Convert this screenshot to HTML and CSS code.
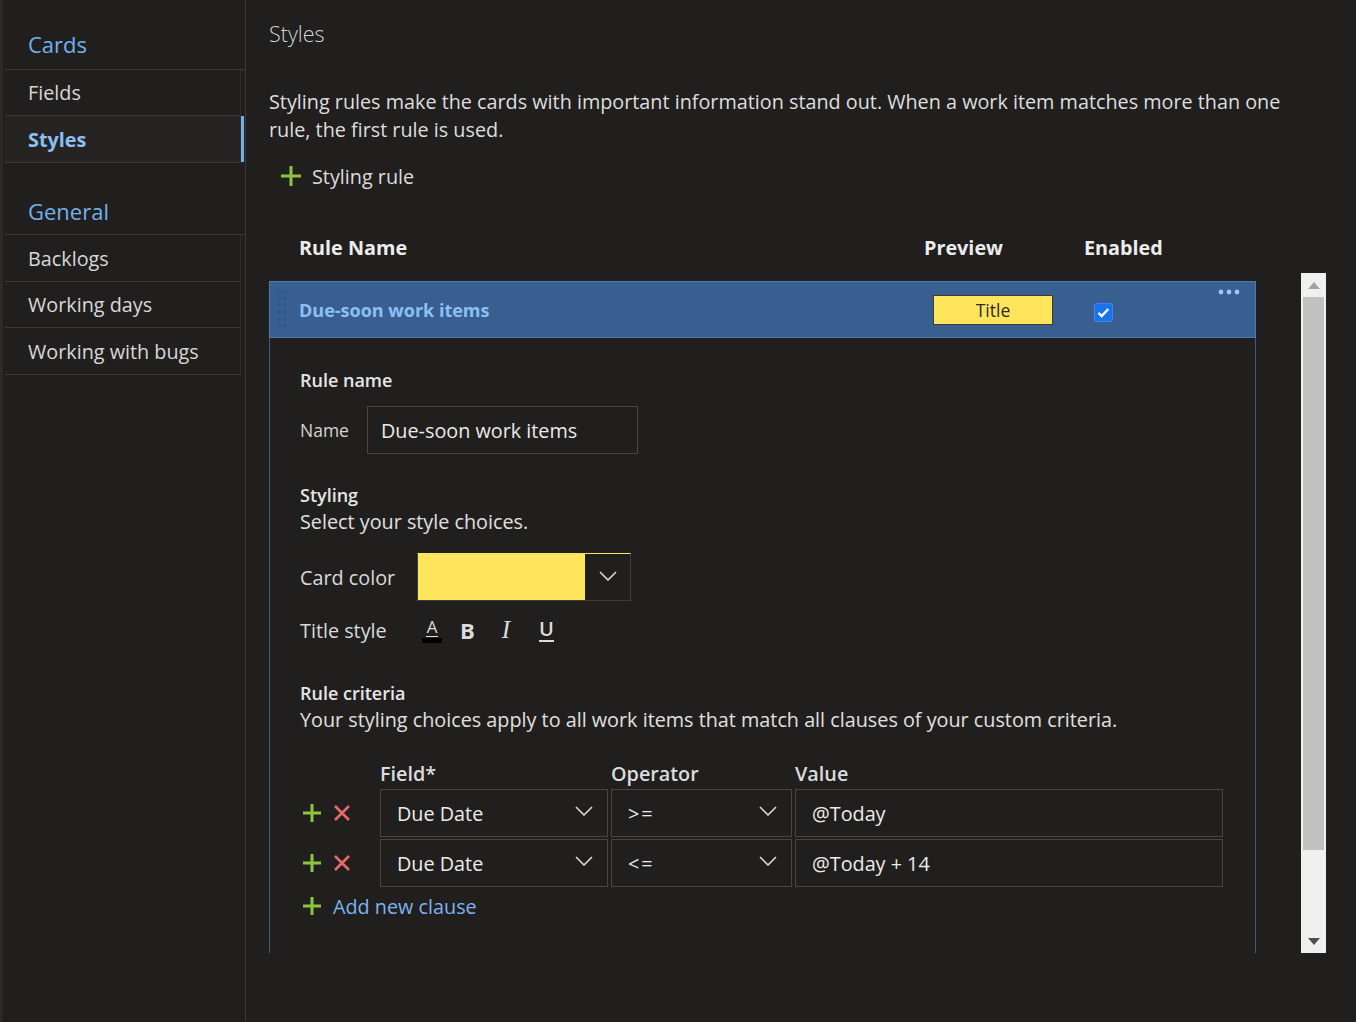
FILE: index.html
```html
<!DOCTYPE html>
<html lang="en">
<head>
<meta charset="utf-8">
<title>Styles</title>
<link rel="stylesheet" href="styles.css">
</head>
<body>
<div class="app">
  <nav class="sidebar">
    <div class="nav-head">Cards</div>
    <div class="nav-item">Fields</div>
    <div class="nav-item tall selected">Styles</div>
    <div class="nav-head group">General</div>
    <div class="nav-item tall">Backlogs</div>
    <div class="nav-item">Working days</div>
    <div class="nav-item tall">Working with bugs</div>
  </nav>

  <main class="main">
    <h1 class="title">Styles</h1>
    <p class="intro">Styling rules make the cards with important information stand out. When a work item matches more than one rule, the first rule is used.</p>
    <div class="add-rule">
      <svg class="plus" width="22" height="22" viewBox="0 0 22 22"><path d="M11 1v20M1 11h20" stroke="#8cc63f" stroke-width="3"/></svg>
      <span>Styling rule</span>
    </div>

    <div class="table-head">
      <span>Rule Name</span>
      <span>Preview</span>
      <span>Enabled</span>
    </div>

    <div class="scroll-area">
      <div class="list">
        <div class="rule-row">
          <svg class="grip" width="16" height="46" viewBox="0 0 16 46">
            <g fill="#2d5a8c">
              <circle cx="3" cy="4" r="2"/><circle cx="9" cy="4" r="2"/>
              <circle cx="3" cy="11" r="2"/><circle cx="9" cy="11" r="2"/>
              <circle cx="3" cy="18" r="2"/><circle cx="9" cy="18" r="2"/>
              <circle cx="3" cy="25" r="2"/><circle cx="9" cy="25" r="2"/>
              <circle cx="3" cy="32" r="2"/><circle cx="9" cy="32" r="2"/>
              <circle cx="3" cy="39" r="2"/><circle cx="9" cy="39" r="2"/>
            </g>
          </svg>
          <span class="rule-name">Due-soon work items</span>
          <span class="preview-cell"><span class="preview">Title</span></span>
          <span class="enabled-cell">
            <svg width="19" height="19" viewBox="0 0 19 19"><rect x="0.5" y="0.5" width="18" height="18" rx="2" fill="#1a73e8" stroke="#3b86f0"/><path d="M4.5 9.8l3.2 3.2 6.6-7" fill="none" stroke="#fff" stroke-width="2.4"/></svg>
          </span>
          <span class="more">
            <svg width="22" height="6" viewBox="0 0 22 6"><g fill="#9cc9f5"><circle cx="3" cy="3" r="2.4"/><circle cx="11" cy="3" r="2.4"/><circle cx="19" cy="3" r="2.4"/></g></svg>
          </span>
        </div>

        <div class="panel">
          <div class="section-label">Rule name</div>
          <div class="name-row">
            <span class="small-label">Name</span>
            <div class="textbox">Due-soon work items</div>
          </div>

          <div class="section-label styling">Styling</div>
          <div class="section-desc">Select your style choices.</div>

          <div class="field-row color-row">
            <span class="field-label">Card color</span>
            <div class="color-drop">
              <span class="swatch"></span>
              <span class="drop-btn">
                <svg width="18" height="10" viewBox="0 0 18 10"><path d="M1 1l8 8 8-8" fill="none" stroke="#e0e0e0" stroke-width="1.5"/></svg>
              </span>
            </div>
          </div>

          <div class="field-row style-row">
            <span class="field-label">Title style</span>
            <div class="style-tools">
              <span class="tool tool-a"><span class="a-letter">A</span><span class="a-bar"></span></span>
              <span class="tool tool-b">B</span>
              <span class="tool tool-i">I</span>
              <span class="tool tool-u">U</span>
            </div>
          </div>

          <div class="section-label criteria">Rule criteria</div>
          <div class="section-desc">Your styling choices apply to all work items that match all clauses of your custom criteria.</div>

          <div class="clause-grid">
            <span></span>
            <span class="col-head">Field*</span>
            <span class="col-head">Operator</span>
            <span class="col-head">Value</span>

            <span class="clause-actions">
              <svg width="20" height="20" viewBox="0 0 20 20"><path d="M10 1v18M1 10h18" stroke="#8cc63f" stroke-width="3"/></svg>
              <svg width="18" height="18" viewBox="0 0 18 18"><path d="M2 2l14 14M16 2L2 16" stroke="#e8686c" stroke-width="2.6"/></svg>
            </span>
            <div class="select"><span>Due Date</span><svg width="18" height="10" viewBox="0 0 18 10"><path d="M1 1l8 8 8-8" fill="none" stroke="#e0e0e0" stroke-width="1.5"/></svg></div>
            <div class="select"><span class="op">&gt;=</span><svg width="18" height="10" viewBox="0 0 18 10"><path d="M1 1l8 8 8-8" fill="none" stroke="#e0e0e0" stroke-width="1.5"/></svg></div>
            <div class="select value">@Today</div>

            <span class="clause-actions">
              <svg width="20" height="20" viewBox="0 0 20 20"><path d="M10 1v18M1 10h18" stroke="#8cc63f" stroke-width="3"/></svg>
              <svg width="18" height="18" viewBox="0 0 18 18"><path d="M2 2l14 14M16 2L2 16" stroke="#e8686c" stroke-width="2.6"/></svg>
            </span>
            <div class="select"><span>Due Date</span><svg width="18" height="10" viewBox="0 0 18 10"><path d="M1 1l8 8 8-8" fill="none" stroke="#e0e0e0" stroke-width="1.5"/></svg></div>
            <div class="select"><span class="op">&lt;=</span><svg width="18" height="10" viewBox="0 0 18 10"><path d="M1 1l8 8 8-8" fill="none" stroke="#e0e0e0" stroke-width="1.5"/></svg></div>
            <div class="select value">@Today + 14</div>
          </div>

          <div class="add-clause">
            <svg width="20" height="20" viewBox="0 0 20 20"><path d="M10 1v18M1 10h18" stroke="#8cc63f" stroke-width="3"/></svg>
            <span>Add new clause</span>
          </div>
          <div class="panel-tail"></div>
        </div>
      </div>

      <div class="scrollbar">
        <div class="sb-arrow">
          <svg width="12" height="7" viewBox="0 0 12 7"><path d="M6 0L12 7H0z" fill="#a3a3a3"/></svg>
        </div>
        <div class="sb-thumb"></div>
        <div class="sb-rest"></div>
        <div class="sb-arrow">
          <svg width="12" height="7" viewBox="0 0 12 7"><path d="M0 0h12L6 7z" fill="#505050"/></svg>
        </div>
      </div>
    </div>
  </main>
</div>
</body>
</html>
```

FILE: styles.css
```css
* { box-sizing: border-box; }

html, body {
  margin: 0;
  padding: 0;
  background: #201f1e;
}

body {
  font-family: "Open Sans", "Noto Sans", sans-serif;
  color: #dcdcdc;
  font-size: 19.8px;
}

.app {
  display: flex;
  height: 1022px;
  overflow: hidden;
}

/* Sidebar */
.sidebar {
  width: 246px;
  flex: none;
  border-left: 3px solid #2b2a29;
  border-right: 1px solid #3a3938;
  padding-top: 19px;
}

.nav-head {
  height: 51px;
  margin-left: 2px;
  padding-left: 23px;
  display: flex;
  align-items: center;
  font-size: 22px;
  color: #72b1ee;
  border-bottom: 1px solid #3a3938;
}

.nav-head.group {
  margin-top: 23px;
  height: 49px;
  padding-top: 1px;
}

.nav-item {
  position: relative;
  height: 46px;
  margin-left: 2px;
  margin-right: 4px;
  padding-left: 23px;
  display: flex;
  align-items: center;
  font-size: 19.8px;
  color: #d8d8d8;
  border-bottom: 1px solid #3a3938;
  border-right: 1px solid #2e2d2c;
}

.nav-item.tall {
  height: 47px;
}

.nav-item.selected {
  background: #252423;
  color: #8cc0f4;
  font-weight: 700;
}

.nav-item.selected::after {
  content: "";
  position: absolute;
  right: -4px;
  top: 0;
  bottom: 0;
  width: 3px;
  background: #72b1ee;
}

/* Main */
.main {
  flex: 1;
  padding: 19px 30px 0 23px;
  min-width: 0;
}

.title {
  margin: 0;
  font-size: 21.5px;
  font-weight: 300;
  line-height: 30px;
  color: #d4d4d4;
}

.intro {
  margin: 39px 0 0 0;
  line-height: 28px;
  color: #dedede;
  max-width: 1040px;
}

.add-rule {
  margin-top: 14px;
  height: 36px;
  display: flex;
  align-items: center;
  gap: 10px;
  padding-left: 11px;
}

.table-head {
  margin-top: 38px;
  display: grid;
  grid-template-columns: 625px 160px 1fr;
  padding-left: 30px;
  height: 30px;
  align-items: center;
  font-weight: 700;
  font-size: 19.8px;
  color: #ececec;
}

.scroll-area {
  margin-top: 11px;
  height: 680px;
  display: flex;
  align-items: stretch;
}

.list {
  width: 987px;
  flex: none;
  padding-top: 8px;
  overflow: hidden;
}

.rule-row {
  position: relative;
  height: 57px;
  background: #385f8f;
  border: 1px solid #4b7bb4;
  display: grid;
  grid-template-columns: 625px 160px 1fr;
  align-items: center;
  padding-left: 29px;
}

.grip {
  position: absolute;
  left: 6px;
  top: 5px;
}

.rule-name {
  font-size: 18px;
  font-weight: 700;
  color: #8cc0f4;
}

.preview-cell {
  padding-left: 9px;
}

.preview {
  display: flex;
  align-items: center;
  justify-content: center;
  width: 120px;
  height: 30px;
  background: #ffe55c;
  border: 1px solid #3a3a3a;
  color: #2a2a2a;
  font-size: 17.5px;
}

.enabled-cell {
  padding-left: 10px;
  padding-top: 6px;
  display: flex;
}

.more {
  position: absolute;
  right: 15px;
  top: 7px;
  display: flex;
}

.panel {
  border-left: 1px solid #3e5a7e;
  border-right: 1px solid #3e5a7e;
  padding: 29px 0 0 30px;
}

.section-label {
  font-size: 18px;
  font-weight: 600;
  line-height: 26px;
  color: #e6e6e6;
}

.section-desc {
  line-height: 28px;
  color: #e0e0e0;
}

.name-row {
  margin-top: 13px;
  display: flex;
  align-items: center;
}

.small-label {
  width: 67px;
  font-size: 17.5px;
  color: #d4d4d4;
}

.textbox {
  width: 271px;
  height: 48px;
  border: 1px solid #474646;
  display: flex;
  align-items: center;
  padding-left: 13px;
  color: #eaeaea;
}

.section-label.styling {
  margin-top: 28px;
}

.field-row {
  display: flex;
  align-items: center;
}

.field-label {
  width: 117px;
  flex: none;
  color: #dadada;
}

.color-row {
  margin-top: 17px;
}

.color-drop {
  width: 214px;
  height: 48px;
  display: flex;
  border: 1px solid #3e3d3c;
  border-top-color: #ffe55c;
}

.swatch {
  width: 167px;
  background: #ffe55c;
}

.drop-btn {
  flex: 1;
  display: flex;
  align-items: center;
  justify-content: center;
  padding-bottom: 2px;
}

.style-row {
  margin-top: 9px;
  height: 40px;
}

.style-tools {
  display: flex;
  align-items: center;
  padding-left: 5px;
}

.tool {
  display: inline-flex;
  flex-direction: column;
  align-items: center;
  color: #dcdcdc;
}

.tool-a {
  width: 20px;
  margin-right: 18px;
}

.a-letter {
  font-size: 17px;
  line-height: 19px;
  border-bottom: 1.5px solid #dcdcdc;
  padding: 0 1px;
}

.a-bar {
  display: block;
  width: 20px;
  height: 5px;
  background: #000;
  margin-top: 1px;
}

.tool-b {
  font-weight: 700;
  font-size: 22px;
  margin-right: 27px;
}

.tool-i {
  font-family: "Liberation Serif", serif;
  font-style: italic;
  font-size: 25px;
  margin-right: 29px;
}

.tool-u {
  font-size: 20px;
  line-height: 22px;
  font-weight: 600;
  border-bottom: 2px solid #dcdcdc;
}

.section-label.criteria {
  margin-top: 30px;
}

.clause-grid {
  margin-top: 26px;
  display: grid;
  grid-template-columns: 77px 228px 181px 428px;
  column-gap: 3px;
  row-gap: 2px;
}

.col-head {
  font-weight: 600;
  color: #dcdcdc;
  line-height: 28px;
  margin-bottom: -1px;
}

.clause-actions {
  display: flex;
  align-items: center;
  gap: 11px;
  padding-left: 2px;
}

.select {
  height: 48px;
  border: 1px solid #474646;
  display: flex;
  align-items: center;
  justify-content: space-between;
  padding: 0 14px 4px 16px;
  color: #ececec;
}

.select span {
  padding-top: 4px;
}

.select .op {
  letter-spacing: 2px;
}

.select.value {
  padding-top: 4px;
}

.add-clause {
  margin-top: 3px;
  height: 32px;
  display: flex;
  align-items: center;
  gap: 11px;
  padding-left: 2px;
  color: #7db3f0;
}

.panel-tail {
  height: 60px;
}

/* Scrollbar */
.scrollbar {
  margin-left: 45px;
  width: 25px;
  background: #f0f0f0;
  display: flex;
  flex-direction: column;
  align-items: center;
}

.sb-arrow {
  height: 24px;
  display: flex;
  align-items: center;
  justify-content: center;
  flex: none;
}

.sb-thumb {
  width: 21px;
  height: 553px;
  background: #c1c1c1;
  flex: none;
}

.sb-rest {
  flex: 1;
}
```
